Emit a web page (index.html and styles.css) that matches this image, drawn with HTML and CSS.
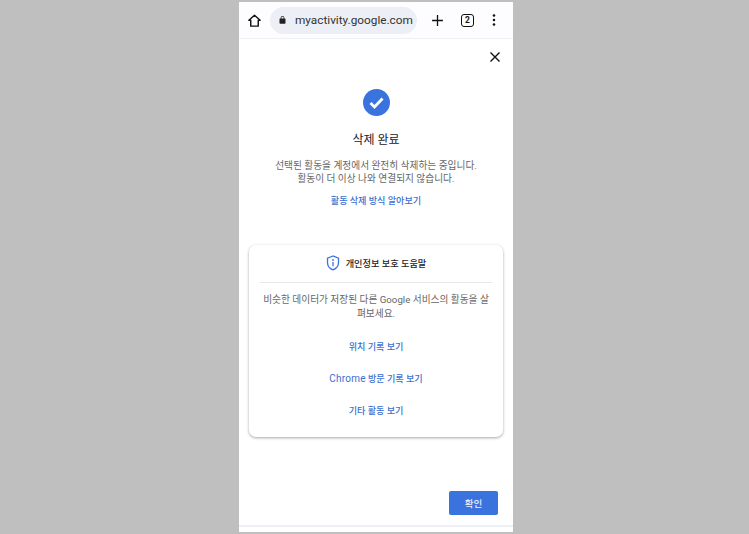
FILE: index.html
```html
<!DOCTYPE html>
<html lang="ko">
<head>
	<meta charset="utf-8">
	<title>삭제 완료</title>
	<link rel="stylesheet" href="styles.css">
</head>
<body>
	<div class="phone">
		<div class="toolbar">
			<svg class="home" viewBox="0 0 24 24"><path d="M12 3.500 3 11.500h3V21h12v-9.500h3z" fill="none" stroke="#111" stroke-width="2.300" stroke-linejoin="round"/></svg>
			<div class="url">
				<svg class="lock" viewBox="0 0 24 24"><path fill="#222" d="M18 8h-1V6a5 5 0 0 0-10 0v2H6a2 2 0 0 0-2 2v10a2 2 0 0 0 2 2h12a2 2 0 0 0 2-2V10a2 2 0 0 0-2-2zM9 6a3 3 0 0 1 6 0v2H9z"/></svg>
				<span class="url-text">myactivity.google.com</span>
			</div>
			<svg class="plus" viewBox="0 0 24 24"><path d="M12 2v20M2 12h20" stroke="#111" stroke-width="2.400" fill="none"/></svg>
			<div class="tabs">2</div>
			<svg class="dots" viewBox="0 0 4 16"><circle cx="2" cy="2" r="1.700"/><circle cx="2" cy="8" r="1.700"/><circle cx="2" cy="14" r="1.700"/></svg>
		</div>

		<div class="content">
			<div class="close-row">
				<svg class="close" viewBox="0 0 12 12"><path d="M1.500 1.500l9 9M10.500 1.500l-9 9" stroke="#111" stroke-width="1.400" fill="none"/></svg>
			</div>

			<svg class="check" viewBox="0 0 27 27">
				<circle cx="13.500" cy="13.500" r="13.500" fill="#3b73de"/>
				<path d="M7.500 14l4 4 8-8.500" stroke="#fff" stroke-width="2.800" fill="none"/>
			</svg>

			<h1 class="title">삭제 완료</h1>
			<p class="desc">선택된 활동을 계정에서 완전히 삭제하는 중입니다.<br>활동이 더 이상 나와 연결되지 않습니다.</p>
			<a class="link learn">활동 삭제 방식 알아보기</a>

			<div class="card">
				<div class="card-head">
					<svg class="shield" viewBox="0 0 14 16">
						<path d="M7 1 1.500 3.200v4.300c0 3.400 2.300 6.200 5.500 7.300 3.200-1.100 5.500-3.900 5.500-7.300V3.200z" fill="none" stroke="#3b73de" stroke-width="1.300"/>
						<circle cx="7" cy="5" r=".9" fill="#3b73de"/>
						<path d="M7 7v4.200" stroke="#3b73de" stroke-width="1.300"/>
					</svg>
					<span class="card-title">개인정보 보호 도움말</span>
				</div>
				<p class="card-text">비슷한 데이터가 저장된 다른 Google 서비스의 활동을 살펴보세요.</p>
				<div class="card-links">
					<a class="link">위치 기록 보기</a>
					<a class="link"><span class="latin">Chrome</span> 방문 기록 보기</a>
					<a class="link">기타 활동 보기</a>
				</div>
			</div>

			<div class="actions">
				<button class="ok">확인</button>
			</div>
		</div>
		<div class="footer"></div>
	</div>
</body>
</html>
```

FILE: styles.css
```css
html, body {
	margin: 0;
	height: 100%;
}
body {
	background-color: #bfbfbf;
	font-family: Roboto, "Noto Sans CJK KR", sans-serif;
	overflow: hidden;
}
.phone {
	width: 274px;
	height: 530px;
	margin: 2px 0 0 239px;
	background-color: #fff;
	display: flex;
	flex-direction: column;
}
.toolbar {
	height: 36px;
	flex: none;
	display: flex;
	align-items: center;
	background-color: #fdfdff;
	border-bottom: 1px solid #eef0f5;
}
.home {
	width: 15px;
	height: 15px;
	margin-left: 8px;
}
.url {
	width: 147px;
	height: 27px;
	margin-left: 8px;
	border-radius: 14px;
	background-color: #eceff5;
	display: flex;
	align-items: center;
	box-sizing: border-box;
	padding-left: 8px;
	overflow: hidden;
}
.lock {
	width: 9px;
	height: 10px;
	flex: none;
}
.url-text {
	margin-left: 8px;
	font-family: Roboto, sans-serif;
	font-size: 11.800px;
	color: #333;
	white-space: nowrap;
}
.plus {
	width: 13px;
	height: 13px;
	margin-left: 14px;
}
.tabs {
	width: 11px;
	height: 11px;
	margin-left: 17px;
	border: 1.500px solid #111;
	border-radius: 3px;
	font-size: 8.500px;
	font-weight: 700;
	line-height: 11px;
	text-align: center;
	color: #111;
}
.dots {
	width: 4px;
	height: 12px;
	margin-left: 18px;
	fill: #111;
}
.content {
	flex: 1;
	display: flex;
	flex-direction: column;
	align-items: center;
}
.close-row {
	align-self: stretch;
	display: flex;
	justify-content: flex-end;
	padding: 12px 12px 0 0;
}
.close {
	width: 12px;
	height: 12px;
}
.check {
	width: 27px;
	height: 27px;
	margin-top: 26px;
}
.title {
	margin: 15px 0 0;
	font-size: 12px;
	font-weight: 400;
	line-height: 18px;
	color: #222;
}
.desc {
	margin: 10px 0 0;
	font-size: 9.700px;
	line-height: 13px;
	color: #666;
	text-align: center;
}
.link {
	font-size: 9.100px;
	font-weight: 500;
	line-height: 14px;
	color: #3b6fd0;
}
.latin {
	font-size: 10px;
	font-weight: 400;
	letter-spacing: 0.200px;
}
.learn {
	margin-top: 9px;
}
.card {
	width: 254px;
	height: 192px;
	margin-top: 37px;
	box-sizing: border-box;
	padding: 0 11px;
	background-color: #fff;
	border-radius: 7px;
	box-shadow: 0 1px 3px rgba(0, 0, 0, 0.35);
	display: flex;
	flex-direction: column;
}
.card-head {
	height: 38px;
	flex: none;
	box-sizing: border-box;
	padding-bottom: 2px;
	display: flex;
	align-items: center;
	justify-content: center;
	gap: 6px;
	border-bottom: 1px solid #e8e8e8;
}
.shield {
	width: 14px;
	height: 16px;
}
.card-title {
	font-size: 9.200px;
	font-weight: 500;
	color: #222;
}
.card-text {
	margin: 10px 0 0;
	font-size: 9.700px;
	line-height: 14px;
	color: #666;
	text-align: center;
	word-break: break-all;
}
.card-links {
	margin-top: 19px;
	display: flex;
	flex-direction: column;
	align-items: center;
	gap: 18px;
}
.actions {
	align-self: stretch;
	display: flex;
	justify-content: flex-end;
	padding: 54px 15px 0 0;
}
.ok {
	width: 49px;
	height: 24px;
	border: none;
	border-radius: 2px;
	background-color: #3b73de;
	color: #e8eefb;
	font-family: inherit;
	font-size: 9.500px;
	font-weight: 500;
}
.footer {
	height: 5px;
	flex: none;
	border-top: 2px solid #eef0f5;
}
```
